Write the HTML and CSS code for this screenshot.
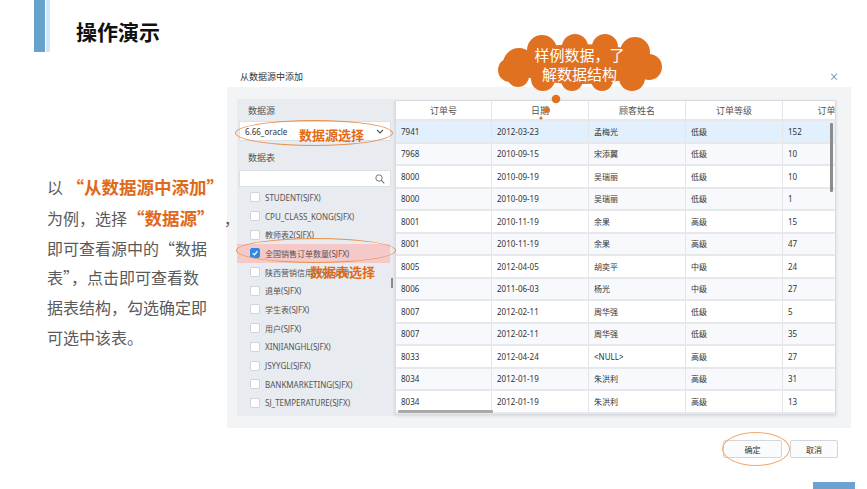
FILE: index.html
```html
<!DOCTYPE html>
<html lang="zh">
<head>
<meta charset="utf-8">
<title>操作演示</title>
<link rel="stylesheet" href="styles.css">
</head>
<body>
<div class="slide">
  <header class="header">
    <div class="bar-dark"></div>
    <div class="bar-light"></div>
    <h1 class="title">操作演示</h1>
  </header>

  <main class="content">
    <div class="intro">
      <div class="line">以 <b class="hl">“从数据源中添加”</b></div>
      <div class="line">为例，选择<b class="hl">“数据源”</b><span class="stray">，</span></div>
      <div class="line">即可查看源中的“数据</div>
      <div class="line">表”，点击即可查看数</div>
      <div class="line">据表结构，勾选确定即</div>
      <div class="line">可选中该表。</div>
    </div>

    <section class="dialog">
      <div class="dialog-head">
        <span class="dialog-title">从数据源中添加</span>
        <span class="close">×</span>
      </div>
      <div class="dialog-body">
        <aside class="side">
          <div class="side-label">数据源</div>
          <div class="select">
            <span>6.66_oracle</span>
            <svg class="chev" width="8" height="5" viewBox="0 0 8 5"><polyline points="1,1 4,4 7,1" fill="none" stroke="#555" stroke-width="1.1"/></svg>
          </div>
          <div class="side-label second">数据表</div>
          <div class="search">
            <svg width="10" height="10" viewBox="0 0 10 10"><circle cx="4" cy="4" r="3.2" fill="none" stroke="#777" stroke-width="1"/><line x1="6.4" y1="6.4" x2="9.3" y2="9.3" stroke="#777" stroke-width="1.2"/></svg>
          </div>
          <ul class="tables">
            <li><i class="cb"></i>STUDENT(SJFX)</li>
            <li><i class="cb"></i>CPU_CLASS_KONG(SJFX)</li>
            <li><i class="cb"></i>教师表2(SJFX)</li>
            <li class="picked"><i class="cb on"><svg width="10" height="10" viewBox="0 0 10 10"><polyline points="2,5.2 4.2,7.3 8,2.8" fill="none" stroke="#fff" stroke-width="1.5"/></svg></i>全国销售订单数量(SJFX)</li>
            <li><i class="cb"></i>陕西营销信用评分(SJFX)</li>
            <li><i class="cb"></i>退单(SJFX)</li>
            <li><i class="cb"></i>学生表(SJFX)</li>
            <li><i class="cb"></i>用户(SJFX)</li>
            <li><i class="cb"></i>XINJIANGHL(SJFX)</li>
            <li><i class="cb"></i>JSYYGL(SJFX)</li>
            <li><i class="cb"></i>BANKMARKETING(SJFX)</li>
            <li><i class="cb"></i>SJ_TEMPERATURE(SJFX)</li>
            <li><i class="cb"></i>TEST(SJFX)</li>
            <span class="list-thumb"></span>
          </ul>
        </aside>

        <div class="grid-wrap">
          <div class="grid">
            <div class="row head"><span>订单号</span><span>日期</span><span>顾客姓名</span><span>订单等级</span><span>订单数</span></div>
            <div class="row sel"><span>7941</span><span>2012-03-23</span><span>孟梅光</span><span>低级</span><span>152</span></div>
            <div class="row alt"><span>7968</span><span>2010-09-15</span><span>宋添翼</span><span>低级</span><span>10</span></div>
            <div class="row"><span>8000</span><span>2010-09-19</span><span>吴瑞丽</span><span>低级</span><span>10</span></div>
            <div class="row alt"><span>8000</span><span>2010-09-19</span><span>吴瑞丽</span><span>低级</span><span>1</span></div>
            <div class="row"><span>8001</span><span>2010-11-19</span><span>余果</span><span>高级</span><span>15</span></div>
            <div class="row alt"><span>8001</span><span>2010-11-19</span><span>余果</span><span>高级</span><span>47</span></div>
            <div class="row"><span>8005</span><span>2012-04-05</span><span>胡奕平</span><span>中级</span><span>24</span></div>
            <div class="row alt"><span>8006</span><span>2011-06-03</span><span>杨光</span><span>中级</span><span>27</span></div>
            <div class="row"><span>8007</span><span>2012-02-11</span><span>周华强</span><span>低级</span><span>5</span></div>
            <div class="row alt"><span>8007</span><span>2012-02-11</span><span>周华强</span><span>低级</span><span>35</span></div>
            <div class="row"><span>8033</span><span>2012-04-24</span><span>&lt;NULL&gt;</span><span>高级</span><span>27</span></div>
            <div class="row alt"><span>8034</span><span>2012-01-19</span><span>朱洪利</span><span>高级</span><span>31</span></div>
            <div class="row"><span>8034</span><span>2012-01-19</span><span>朱洪利</span><span>高级</span><span>13</span></div>
          </div>
          <span class="vthumb"></span>
          <span class="hthumb"></span>
        </div>
      </div>
      <div class="dialog-foot">
        <button class="btn">确定</button>
        <button class="btn">取消</button>
      </div>
    </section>
  </main>

  <footer class="footer"><div class="foot-bar"></div></footer>

  <!-- annotations drawn over the screenshot -->
  <div class="ring ring-source"></div>
  <div class="note note-source">数据源选择</div>
  <div class="ring ring-table"></div>
  <div class="note note-table">数据表选择</div>
  <div class="ring ring-ok"></div>

  <svg class="cloud" width="170" height="90" viewBox="0 0 170 90">
    <g fill="#e07121">
      <ellipse cx="83" cy="30" rx="70" ry="20"/>
      <circle cx="22" cy="30" r="16"/>
      <circle cx="13" cy="36" r="12"/>
      <circle cx="45" cy="16" r="15"/>
      <circle cx="78" cy="13" r="13"/>
      <circle cx="108" cy="13" r="13"/>
      <circle cx="138" cy="18" r="15"/>
      <circle cx="152" cy="33" r="13"/>
      <circle cx="135" cy="44" r="13"/>
      <circle cx="105" cy="46" r="11"/>
      <circle cx="75" cy="46" r="11"/>
      <circle cx="46" cy="45" r="12"/>
      <circle cx="21" cy="42" r="11"/>
      <circle cx="59" cy="65" r="4.3"/>
      <circle cx="50" cy="76" r="3"/>
      <circle cx="44" cy="84" r="1.6"/>
    </g>
  </svg>
  <div class="cloud-text">样例数据，了<br>解数据结构</div>
</div>
</body>
</html>
```

FILE: styles.css
```css
* { box-sizing: border-box; margin: 0; padding: 0; }
html, body { background: #fff; }
body {
  font-family: "Noto Sans", "Noto Sans CJK SC", sans-serif;
  color: #333;
}
.slide {
  position: relative;
  width: 867px;
  height: 489px;
  overflow: hidden;
  display: flex;
  flex-direction: column;
  background: #fff;
}

/* header */
.header {
  display: flex;
  height: 52px;
  padding-left: 34px;
  flex: none;
}
.bar-dark { width: 11px; height: 52px; background: #67a2cc; }
.bar-light { width: 4px; height: 52px; background: #cfe7fa; margin-left: 1px; }
.title {
  margin-left: 26px;
  padding-top: 19px;
  font-family: "Noto Sans CJK SC", sans-serif;
  font-size: 21px;
  line-height: 24px;
  font-weight: 700;
  color: #111;
}

/* content */
.content {
  flex: 1;
  display: flex;
  align-items: flex-start;
}
.intro {
  position: relative;
  z-index: 1;
  width: 180px;
  margin-left: 47px;
  margin-top: 120px;
  font-family: "Noto Sans CJK SC", sans-serif;
  font-size: 16px;
  line-height: 29.8px;
  color: #5a5a5a;
  white-space: nowrap;
}
.intro .hl { color: #e0691a; font-weight: 700; font-size: 17.5px; }
.intro .stray { margin-left: 18px; }

/* dialog */
.dialog {
  width: 624px;
  margin-top: 14px;
  font-family: "Noto Sans", "Noto Sans CJK SC", sans-serif;
}
.dialog-head {
  height: 21px;
  display: flex;
  align-items: center;
  justify-content: space-between;
  padding: 0 13px 0 13px;
}
.dialog-title { font-size: 9px; color: #333; font-family: "Noto Sans CJK SC", sans-serif; }
.close { font-size: 14px; color: #777; line-height: 1; font-weight: 300; }

.dialog-body {
  height: 341px;
  background: #f3f4f6;
  padding: 12px 15px 12px 10px;
  display: flex;
}

.side {
  width: 158px;
  height: 317px;
  background: #e8ebef;
  display: flex;
  flex-direction: column;
  overflow: hidden;
}
.side-label {
  font-family: "Noto Sans CJK SC", sans-serif;
  font-size: 9px;
  line-height: 14px;
  color: #555;
  padding-left: 11px;
  margin-top: 5px;
}
.side-label.second { margin-top: 10px; }
.select {
  margin: 3px 4px 0 2px;
  height: 20px;
  background: #fff;
  border: 1px solid #dde0e4;
  display: flex;
  align-items: center;
  justify-content: space-between;
  padding: 0 6px 0 5px;
  font-size: 8px;
  color: #333;
}
.search {
  margin: 5px 4px 0 2px;
  height: 17px;
  background: #fff;
  border: 1px solid #dde0e4;
  display: flex;
  align-items: center;
  justify-content: flex-end;
  padding-right: 5px;
}
.tables {
  list-style: none;
  position: relative;
  margin-top: 1px;
  flex: 1;
  overflow: hidden;
}
.tables li {
  height: 18.7px;
  display: flex;
  align-items: center;
  padding-left: 13px;
  font-size: 8px;
  color: #555;
  white-space: nowrap;
  margin-right: 5px;
}
.tables li.picked { background: #f5c9c8; }
.cb {
  width: 10px;
  height: 10px;
  background: #fff;
  border: 1px solid #d0d3d8;
  border-radius: 2px;
  margin-right: 5px;
  flex: none;
  display: flex;
  align-items: center;
  justify-content: center;
}
.cb.on { background: #2b8ae4; border-color: #2b8ae4; }
.cb svg { display: block; }
.list-thumb {
  position: absolute;
  right: 2px;
  top: 90px;
  width: 2px;
  height: 10px;
  background: #8a8a8a;
}

/* table */
.grid-wrap {
  position: relative;
  width: 441px;
  height: 315px;
  margin-top: 1px;
  background: #fff;
  border: 1px solid #d8dbdf;
  box-shadow: 0 1px 3px rgba(0,0,0,0.12);
  overflow: hidden;
}
.grid { width: 484px; }
.row {
  display: grid;
  grid-template-columns: 96px 97px 97px 97px 97px;
  height: 22.5px;
  border-bottom: 2px solid #e6e8eb;
  font-size: 8px;
  color: #333;
}
.row span {
  display: flex;
  align-items: center;
  padding-left: 5px;
  border-right: 1px solid #e3e5e8;
  white-space: nowrap;
}
.row.head { height: 20px; background: #fff; }
.row.head span {
  justify-content: center;
  padding-left: 0;
  font-size: 9px;
  color: #555;
  font-family: "Noto Sans CJK SC", sans-serif;
}
.row.sel { background: #e1f0fc; }
.row.alt { background: #f7f9fc; }
.vthumb {
  position: absolute;
  right: 2px;
  top: 22px;
  width: 3px;
  height: 69px;
  background: #8c8c8c;
  border-radius: 1px;
}
.hthumb {
  position: absolute;
  left: 2px;
  bottom: 1px;
  width: 95px;
  height: 3px;
  background: #a9a9a9;
  border-radius: 1px;
}

.dialog-foot {
  display: flex;
  justify-content: flex-end;
  gap: 8px;
  padding-right: 13px;
  margin-top: 12px;
}
.btn {
  height: 18px;
  width: 59px;
  background: #fafbfc;
  border: 1px solid #d3d7dc;
  border-radius: 2px;
  font-family: "Noto Sans CJK SC", sans-serif;
  font-size: 8px;
  color: #333;
}
.btn + .btn { width: 48px; }

/* footer */
.footer {
  height: 7px;
  flex: none;
  display: flex;
  justify-content: flex-end;
  padding-right: 12px;
}
.foot-bar { width: 42px; height: 7px; background: #6aa2d2; }

/* annotations */
.ring {
  position: absolute;
  border: 1px solid #e8914f;
  border-radius: 50%;
}
.ring-source { left: 235px; top: 120px; width: 158px; height: 26px; }
.ring-table { left: 236px; top: 238px; width: 160px; height: 25px; }
.ring-ok { left: 722px; top: 432px; width: 68px; height: 34px; border-color: #f1a96f; }
.note {
  position: absolute;
  font-family: "Noto Sans CJK SC", sans-serif;
  font-size: 13px;
  line-height: 16px;
  font-weight: 700;
  color: #e26a14;
}
.note-source { left: 299px; top: 127px; }
.note-table { left: 310px; top: 264px; }
.cloud { position: absolute; left: 497px; top: 34px; }
.cloud-text {
  position: absolute;
  left: 497px;
  top: 45px;
  width: 165px;
  text-align: center;
  font-family: "Noto Sans CJK SC", sans-serif;
  font-size: 15px;
  line-height: 19px;
  color: #fff;
}
```
